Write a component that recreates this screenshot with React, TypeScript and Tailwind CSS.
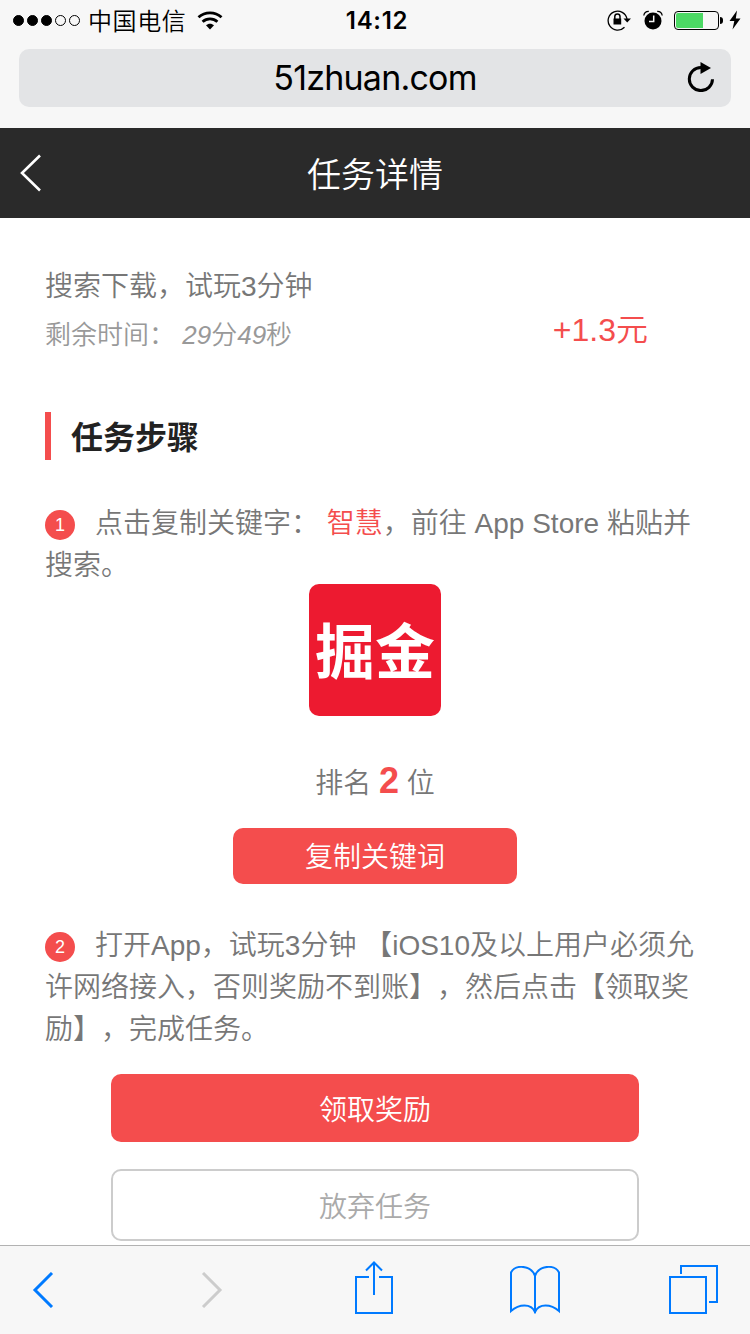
import type { ReactNode } from 'react';

const SIGNAL = [true, true, true, false, false];

export default function App() {
  return (
    <div className="flex h-[1334px] w-[750px] flex-col overflow-hidden bg-white font-['Liberation_Sans','Noto_Sans_CJK_SC',sans-serif] [text-spacing-trim:space-all]">
      <BrowserHeader />
      <NavBar title="任务详情" />
      <TaskDetail />
      <BrowserToolbar />
    </div>
  );
}

function BrowserHeader() {
  return (
    <header className="h-32 shrink-0 bg-[#f7f7f7] text-black">
      <div className="grid h-10 grid-cols-3 items-center pr-[9px] pl-[13px]">
        <div className="flex items-center">
          <div className="flex gap-[3px]">
            {SIGNAL.map((on, i) => (
              <span
                key={i}
                className={`size-[11px] rounded-full border border-black ${on ? 'bg-black' : ''}`}
              />
            ))}
          </div>
          <span className="ml-2 font-['Noto_Sans_CJK_SC',sans-serif] text-2xl leading-10 font-[350] tracking-[0.6px]">
            中国电信
          </span>
          <WifiIcon />
        </div>
        <span className="pt-0.5 text-center font-['Inter',sans-serif] text-2xl leading-[38px] font-semibold tracking-[0.7px]">
          14:12
        </span>
        <div className="flex items-center justify-end">
          <RotationLockIcon />
          <AlarmIcon />
          <BatteryIcon />
          <BoltIcon />
        </div>
      </div>

      <div className="mx-[19px] mt-[9px] flex h-[58px] items-center rounded-[10px] bg-[#e3e4e6] pr-[15px] pl-[45px]">
        <span className="flex-1 text-center font-['Inter',sans-serif] text-[34px] leading-[58px] tracking-[-0.8px]">
          51zhuan.com
        </span>
        <ReloadIcon />
      </div>
    </header>
  );
}

function NavBar({ title }: { title: string }) {
  return (
    <nav className="flex h-[90px] shrink-0 items-center bg-[#2a2a2a] px-5 text-white">
      <svg className="h-10 w-[22px]" viewBox="0 0 22 40" fill="none" stroke="currentColor" strokeWidth="2.6">
        <path d="M20 2.5 2 20l18 17.5" />
      </svg>
      <h1 className="flex-1 pt-1 pr-[22px] text-center text-[34px] leading-[86px] font-[350]">{title}</h1>
    </nav>
  );
}

function TaskDetail() {
  return (
    <main className="flex-1 overflow-hidden px-[45px] pt-12 font-[350] text-[#777]">
      <section className="flex items-end justify-between pr-[57px]">
        <div>
          <p className="text-[28px] leading-[42px]">搜索下载，试玩3分钟</p>
          <p className="mt-[7px] text-[26px] leading-[41px] text-[#999]">
            剩余时间： <em>29</em>分<em>49</em>秒
          </p>
        </div>
        <p className="pb-[5px] text-[32px] leading-[42px] text-[#f44d4d]">+1.3元</p>
      </section>

      <h2 className="mt-14 flex h-12 items-center border-l-[6px] border-[#f44d4d] pt-1 pl-5 text-[32px] font-bold text-[#222]">
        任务步骤
      </h2>

      <section className="mt-[43px] text-[28px] leading-[42px]">
        <p className="whitespace-nowrap">
          <StepBadge>1</StepBadge>
          点击复制关键字： <span className="text-[#f44d4d]">智慧</span>，前往 App Store 粘贴并
          <br />
          搜索。
        </p>
        <div className="mx-auto -mt-[3px] flex size-[132px] items-center justify-center rounded-[10px] bg-[#ed1a30] pb-1 font-['Noto_Sans_CJK_SC',sans-serif] text-[60px] leading-none font-bold text-white">
          掘金
        </div>
        <p className="mt-[47px] h-[42px] text-center">
          排名 <strong className="text-[36px] leading-none font-bold text-[#f44d4d]">2</strong> 位
        </p>
        <button className="mx-auto mt-[23px] block h-14 w-[284px] rounded-[10px] bg-[#f44d4d] pt-1 text-white">
          复制关键词
        </button>
      </section>

      <section className="mt-[41px] text-[28px] leading-[42px]">
        <p className="whitespace-nowrap">
          <StepBadge>2</StepBadge>
          打开App，试玩3分钟 【iOS10及以上用户必须允
          <br />
          许网络接入，否则奖励不到账】，然后点击【领取奖
          <br />
          励】，完成任务。
        </p>
        <button className="mx-auto mt-[23px] block h-[68px] w-[528px] rounded-[10px] bg-[#f44d4d] pt-1.5 text-white">
          领取奖励
        </button>
        <button className="mx-auto mt-[27px] block h-[72px] w-[528px] rounded-[10px] border-2 border-[#ccc] pt-1.5 text-[#aaa]">
          放弃任务
        </button>
      </section>
    </main>
  );
}

function StepBadge({ children }: { children: ReactNode }) {
  return (
    <span className="mt-[7px] mr-5 inline-flex size-[30px] items-center justify-center rounded-full bg-[#f44d4d] align-top text-lg leading-none text-white">
      {children}
    </span>
  );
}

function BrowserToolbar() {
  return (
    <footer className="flex h-[89px] shrink-0 items-center border-t border-[#b2b2b2] bg-[#f7f7f7] pl-8 text-[#007aff]">
      <svg className="h-9 w-[22px]" viewBox="0 0 22 36" fill="none" stroke="currentColor" strokeWidth="3">
        <path d="M20 1 3 18l17 17" />
      </svg>
      <svg className="ml-[147px] h-9 w-[22px] text-[#ccc]" viewBox="0 0 22 36" fill="none" stroke="currentColor" strokeWidth="3">
        <path d="m2 1 17 17L2 35" />
      </svg>
      {/* share */}
      <svg className="-mt-1 ml-[132px] h-[54px] w-[38px]" viewBox="0 0 38 54" fill="none" stroke="currentColor" strokeWidth="2">
        <path d="M14 16H1v36h36V16H24M19 34V1.500M11 9.500l8-8 8 8" />
      </svg>
      {/* bookmarks */}
      <svg className="ml-[117px] h-12 w-[50px]" viewBox="0 0 50 48" fill="none" stroke="currentColor" strokeWidth="2">
        <path d="M25 47V10C21-1.500 5-1.500 1 6.500V45c8-7 20-8 24 1 4-9 16-8 24-1V6.500C45-1.500 29-1.500 25 10" />
      </svg>
      {/* tabs */}
      <svg className="-mt-px ml-[109px] size-[49px]" viewBox="0 0 49 49" fill="none" stroke="currentColor" strokeWidth="2">
        <path d="M1 12h36v36H1zM12 9V1h36v36h-8" />
      </svg>
    </footer>
  );
}

function WifiIcon() {
  return (
    <svg className="ml-[11px] h-[19px] w-[26px]" viewBox="0 0 26 19" fill="none" stroke="currentColor" strokeWidth="2.8">
      <path d="M1.5 6.3C8 .3 18 .3 24.5 6.3M5.6 10.7c4.2-3.900 10.600-3.900 14.800 0" />
      <path d="M13 18.500 9 14.300c2.200-2.200 5.800-2.200 8 0z" fill="currentColor" stroke="none" />
    </svg>
  );
}

function RotationLockIcon() {
  return (
    <svg className="h-[22px] w-6" viewBox="0 0 24 22" fill="none" stroke="currentColor" strokeWidth="1.3">
      <path d="M17.500 18.200A9.500 9.500 0 1 1 20 10" />
      <path d="M16.500 9.500h7.500l-3.800 4z" fill="currentColor" stroke="none" />
      <path d="M6.500 9.500h7.700v6H6.500z" fill="currentColor" stroke="none" />
      <path d="M7.800 10V7.500a2.600 2.600 0 0 1 5.200 0V10" strokeWidth="1.500" />
    </svg>
  );
}

function AlarmIcon() {
  return (
    <svg className="ml-3 h-5 w-5" viewBox="0 0 20 20">
      <circle cx="10" cy="11" r="8.500" fill="#000" />
      <path d="M.8 5.500C1.200 2.500 3 1.200 5.800 1.300M14.200 1.300c2.800-.1 4.600 1.200 5 4.200" fill="none" stroke="#000" strokeWidth="1.300" />
      <path d="M10.700 5.500v6H6" fill="none" stroke="#f7f7f7" strokeWidth="1.500" />
    </svg>
  );
}

function BatteryIcon() {
  return (
    <div className="ml-[11px] flex items-center">
      <div className="h-[19px] w-[45px] rounded-[4px] border border-black p-px">
        <div className="h-full w-[27px] rounded-l-[2px] bg-[#4cd964]" />
      </div>
      <span className="ml-px h-[7px] w-[3px] rounded-r-full bg-black" />
    </div>
  );
}

function BoltIcon() {
  return (
    <svg className="ml-1.5 h-5 w-3" viewBox="0 0 12 20" fill="currentColor">
      <path d="M8 .5.500 11h4.800L3.500 19.500 11.500 8.500H6.800z" />
    </svg>
  );
}

function ReloadIcon() {
  return (
    <svg className="-mt-0.5 h-[30px] w-[30px]" viewBox="0 0 30 30">
      <path d="M26.500 17.200A11.600 11.600 0 1 1 15 5.400" fill="none" stroke="#000" strokeWidth="3" />
      <path d="M14.500 0v12L25 6z" fill="#000" />
    </svg>
  );
}
